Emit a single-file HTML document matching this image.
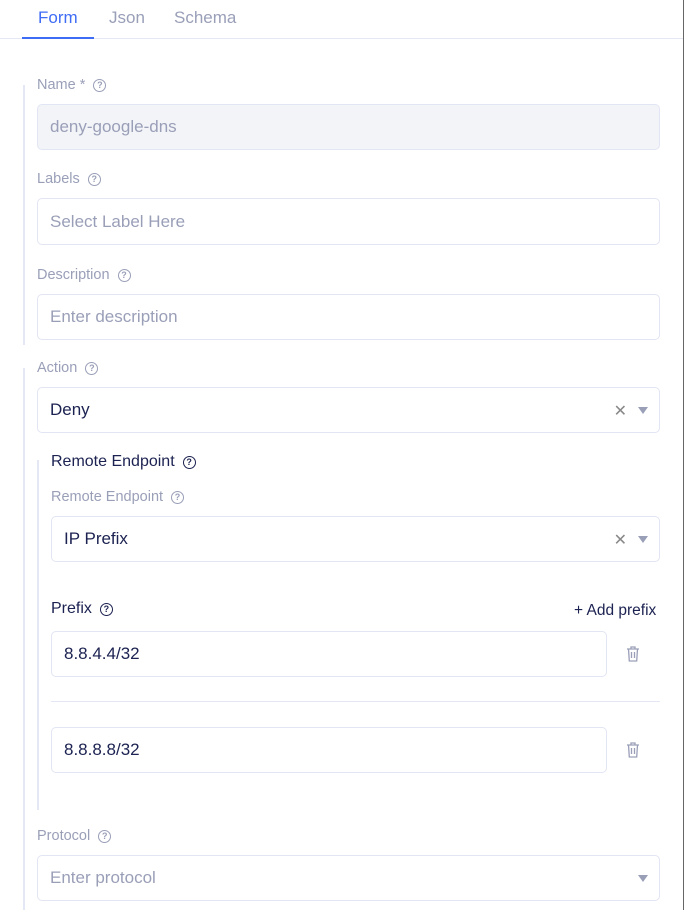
<!DOCTYPE html><html><head><style>
*{box-sizing:border-box;margin:0;padding:0}
body{width:684px;height:910px;background:#fff;font-family:"Liberation Sans",sans-serif;position:relative;overflow:hidden}
.a{position:absolute}
.tab{position:absolute;top:8px;font-size:17px;color:#9a9fb8}
.lbl{position:absolute;font-size:14.5px;color:#9a9fb8;display:flex;align-items:center;gap:8px}
.q{width:13px;height:13px;border:1.2px solid currentColor;border-radius:50%;font-size:9px;line-height:11px;text-align:center;font-weight:bold}
.in{position:absolute;border:1px solid #e2e5f3;border-radius:5px;height:46px;font-size:17px;color:#9a9fb8;padding-left:12px;display:flex;align-items:center}
.dk{color:#1c2251}
.x{position:absolute;right:32px;top:13px;font-size:16px;color:#888}
.tri{position:absolute;right:11px;top:19px;width:0;height:0;border-left:5px solid transparent;border-right:5px solid transparent;border-top:7px solid #9a9fb8}
.vl{position:absolute;width:2px;background:#e4e7f4}
</style></head><body>
<div class="tab" style="left:38px;color:#3f6cf5">Form</div>
<div class="tab" style="left:109px">Json</div>
<div class="tab" style="left:174px">Schema</div>
<div class="a" style="left:0;top:38px;width:684px;height:1px;background:#e4e7f4"></div>
<div class="a" style="left:22px;top:37px;width:72px;height:2px;background:#3f6cf5"></div>
<div class="a" style="left:683px;top:0;width:1px;height:910px;background:#666"></div>
<div class="vl" style="left:23px;top:85px;height:260px"></div>
<div class="vl" style="left:23px;top:368px;height:542px"></div>
<div class="vl" style="left:37px;top:460px;height:350px"></div>

<div class="lbl" style="left:37px;top:77px">Name * <span class="q">?</span></div>
<div class="in" style="left:37px;top:104px;width:623px;background:#f3f4f8">deny-google-dns</div>
<div class="lbl" style="left:37px;top:171px">Labels <span class="q">?</span></div>
<div class="in" style="left:37px;top:198px;width:623px;height:47px">Select Label Here</div>
<div class="lbl" style="left:37px;top:267px">Description <span class="q">?</span></div>
<div class="in" style="left:37px;top:294px;width:623px">Enter description</div>
<div class="lbl" style="left:37px;top:360px">Action <span class="q">?</span></div>
<div class="in dk" style="left:37px;top:387px;width:623px">Deny<span class="x">✕</span><span class="tri"></span></div>
<div class="lbl dk" style="left:51px;top:453px;font-size:16px;color:#1c2251">Remote Endpoint <span class="q">?</span></div>
<div class="lbl" style="left:51px;top:489px">Remote Endpoint <span class="q">?</span></div>
<div class="in dk" style="left:51px;top:516px;width:609px">IP Prefix<span class="x">✕</span><span class="tri"></span></div>
<div class="lbl" style="left:51px;top:600px;font-size:16px;color:#1c2251">Prefix <span class="q">?</span></div>
<div class="a" style="left:574px;top:602px;font-size:15.5px;color:#1c2251">+ Add prefix</div>
<div class="in dk" style="left:51px;top:631px;width:556px">8.8.4.4/32</div>
<svg class="a" style="left:626px;top:646px" width="14" height="16" viewBox="0 0 14 16" fill="none" stroke="#9a9fb8" stroke-width="1.3"><path d="M1 3h12M5 3V1h4v2M2.5 3l.8 12h7.4l.8-12M5.5 6v6M8.5 6v6"/></svg>
<div class="a" style="left:51px;top:701px;width:609px;height:1px;background:#e4e7f4"></div>
<div class="in dk" style="left:51px;top:727px;width:556px">8.8.8.8/32</div>
<svg class="a" style="left:626px;top:742px" width="14" height="16" viewBox="0 0 14 16" fill="none" stroke="#9a9fb8" stroke-width="1.3"><path d="M1 3h12M5 3V1h4v2M2.5 3l.8 12h7.4l.8-12M5.5 6v6M8.5 6v6"/></svg>
<div class="lbl" style="left:37px;top:828px">Protocol <span class="q">?</span></div>
<div class="in" style="left:37px;top:855px;width:623px">Enter protocol<span class="tri"></span></div>
</body></html>
